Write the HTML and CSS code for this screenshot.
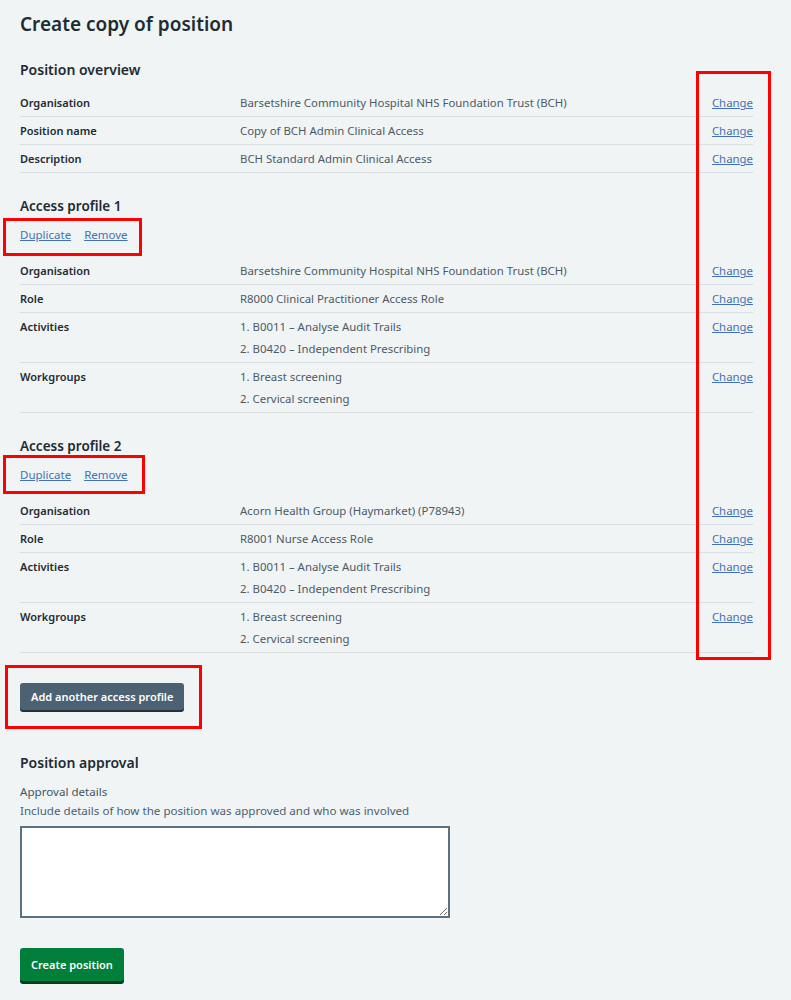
FILE: index.html
```html
<!DOCTYPE html>
<html lang="en">
<head>
    <meta charset="UTF-8">
    <meta name="viewport" content="width=device-width, initial-scale=1.0">
    <title>Create copy of position</title>
    <link rel="stylesheet" href="styles.css">
</head>
<body>
    <main class="page">
        <h1 class="page-title">Create copy of position</h1>

        <h2 class="section-title first">Position overview</h2>
        <dl class="summary">
            <div class="summary-row">
                <dt>Organisation</dt>
                <dd>Barsetshire Community Hospital NHS Foundation Trust (BCH)</dd>
                <dd class="action"><a href="#">Change</a></dd>
            </div>
            <div class="summary-row">
                <dt>Position name</dt>
                <dd>Copy of BCH Admin Clinical Access</dd>
                <dd class="action"><a href="#">Change</a></dd>
            </div>
            <div class="summary-row">
                <dt>Description</dt>
                <dd>BCH Standard Admin Clinical Access</dd>
                <dd class="action"><a href="#">Change</a></dd>
            </div>
        </dl>

        <h2 class="section-title">Access profile 1</h2>
        <div class="profile-links">
            <a href="#">Duplicate</a>
            <a href="#">Remove</a>
        </div>
        <dl class="summary">
            <div class="summary-row">
                <dt>Organisation</dt>
                <dd>Barsetshire Community Hospital NHS Foundation Trust (BCH)</dd>
                <dd class="action"><a href="#">Change</a></dd>
            </div>
            <div class="summary-row">
                <dt>Role</dt>
                <dd>R8000 Clinical Practitioner Access Role</dd>
                <dd class="action"><a href="#">Change</a></dd>
            </div>
            <div class="summary-row">
                <dt>Activities</dt>
                <dd>
                    <ol class="plain-list">
                        <li>1. B0011 – Analyse Audit Trails</li>
                        <li>2. B0420 – Independent Prescribing</li>
                    </ol>
                </dd>
                <dd class="action"><a href="#">Change</a></dd>
            </div>
            <div class="summary-row">
                <dt>Workgroups</dt>
                <dd>
                    <ol class="plain-list">
                        <li>1. Breast screening</li>
                        <li>2. Cervical screening</li>
                    </ol>
                </dd>
                <dd class="action"><a href="#">Change</a></dd>
            </div>
        </dl>

        <h2 class="section-title">Access profile 2</h2>
        <div class="profile-links">
            <a href="#">Duplicate</a>
            <a href="#">Remove</a>
        </div>
        <dl class="summary">
            <div class="summary-row">
                <dt>Organisation</dt>
                <dd>Acorn Health Group (Haymarket) (P78943)</dd>
                <dd class="action"><a href="#">Change</a></dd>
            </div>
            <div class="summary-row">
                <dt>Role</dt>
                <dd>R8001 Nurse Access Role</dd>
                <dd class="action"><a href="#">Change</a></dd>
            </div>
            <div class="summary-row">
                <dt>Activities</dt>
                <dd>
                    <ol class="plain-list">
                        <li>1. B0011 – Analyse Audit Trails</li>
                        <li>2. B0420 – Independent Prescribing</li>
                    </ol>
                </dd>
                <dd class="action"><a href="#">Change</a></dd>
            </div>
            <div class="summary-row">
                <dt>Workgroups</dt>
                <dd>
                    <ol class="plain-list">
                        <li>1. Breast screening</li>
                        <li>2. Cervical screening</li>
                    </ol>
                </dd>
                <dd class="action"><a href="#">Change</a></dd>
            </div>
        </dl>

        <button class="button button-secondary" type="button">Add another access profile</button>

        <h2 class="section-title approval">Position approval</h2>
        <label class="field-label" for="approval">Approval details</label>
        <div class="field-hint">Include details of how the position was approved and who was involved</div>
        <textarea class="textarea" id="approval"></textarea>

        <button class="button button-primary" type="submit">Create position</button>
    </main>

    <!-- review annotations -->
    <div class="note note-changes"></div>
    <div class="note note-profile-1"></div>
    <div class="note note-profile-2"></div>
    <div class="note note-add"></div>
</body>
</html>
```

FILE: styles.css
```css
body {
    margin: 0;
    background-color: #f0f4f5;
    color: #212b32;
    font-family: "Noto Sans", "Open Sans", Arial, sans-serif;
    font-size: 11px;
}
.page {
    width: 733px;
    padding: 10px 0 16px 20px;
}
.page-title {
    margin: 0;
    font-size: 19px;
    line-height: 28px;
    font-weight: 600;
}
.section-title {
    margin: 23px 0 10px;
    font-size: 13.5px;
    line-height: 20px;
    font-weight: 600;
}
.section-title.first {
    margin: 22px 0 9px;
    font-size: 14px;
}
.section-title.approval {
    margin: 43px 0 9px;
    font-size: 14px;
}
.summary {
    margin: 0;
}
.summary-row {
    display: grid;
    grid-template-columns: 220px 1fr auto;
    border-bottom: 1px solid #d8dde0;
    padding: 6px 0 5px;
    line-height: 16px;
}
.summary-row dt {
    font-weight: 600;
}
.summary-row dd {
    margin: 0;
    color: #4c5a66;
    font-size: 11.4px;
}
.plain-list {
    margin: 0;
    padding: 0;
    list-style: none;
}
.plain-list li + li {
    margin-top: 6px;
}
a {
    color: #4371b6;
    text-decoration: underline;
}
.profile-links {
    display: flex;
    gap: 13px;
    font-size: 11.5px;
    line-height: 18px;
    margin-bottom: 13px;
}
.button {
    display: block;
    border: 0;
    border-radius: 3px;
    color: #fff;
    font-family: inherit;
    font-weight: 600;
    cursor: pointer;
}
.button-secondary {
    margin-top: 30px;
    height: 27px;
    padding: 0 11px;
    font-size: 11px;
    background-color: #4c6272;
    box-shadow: 0 2px 0 #263139;
}
.button-primary {
    margin-top: 30px;
    height: 33px;
    padding: 0 11px;
    font-size: 11px;
    background-color: #007f3b;
    box-shadow: 0 3px 0 #00401e;
}
.field-label,
.field-hint {
    display: block;
    font-size: 11.6px;
    line-height: 19px;
    color: #4c6272;
}
.field-label {
    color: #425563;
}
.textarea {
    display: block;
    margin-top: 6px;
    width: 430px;
    height: 92px;
    box-sizing: border-box;
    border: 2px solid #5d707d;
    background: #fff;
}
.note {
    position: absolute;
    border: 3px solid #ff0000;
    box-sizing: border-box;
}
.note-changes {
    left: 696px;
    top: 71px;
    width: 75px;
    height: 589px;
}
.note-profile-1 {
    left: 3px;
    top: 218px;
    width: 139px;
    height: 38px;
}
.note-profile-2 {
    left: 3px;
    top: 455px;
    width: 142px;
    height: 39px;
}
.note-add {
    left: 5px;
    top: 665px;
    width: 197px;
    height: 64px;
}
```
